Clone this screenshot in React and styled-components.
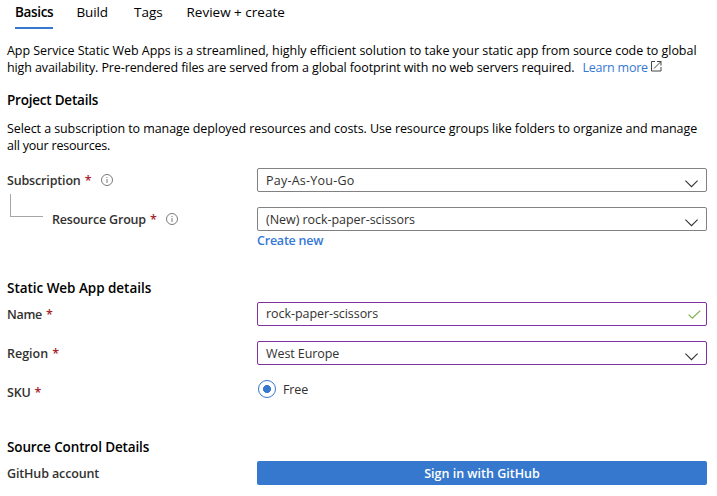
import React from 'react';
import styled, { createGlobalStyle } from 'styled-components';

const GlobalStyle = createGlobalStyle`
  * { box-sizing: border-box; }
  body {
    margin: 0;
    background: #fff;
    color: #000;
    font: 12.5px/17px "Open Sans", "Noto Sans", sans-serif;
  }
`;

const Page = styled.main`
  width: 717px;
  height: 496px;
  overflow: hidden;
  padding: 3px 10px 0 7px;
`;

const Tabs = styled.nav`
  display: grid;
  grid-template-columns: 61.5px 57.5px 52.5px auto;
  justify-content: start;
  height: 26px;
  padding-left: 8px;
`;

const Tab = styled.a`
  justify-self: start;
  height: 26px;
  font-size: 13.5px;
  line-height: 18px;
  white-space: nowrap;
  font-weight: ${(p) => (p.$active ? 600 : 400)};
  letter-spacing: ${(p) => p.$track || 0}px;
  border-bottom: 2px solid ${(p) => (p.$active ? '#3578cd' : 'transparent')};
`;

const Paragraph = styled.p`
  margin: ${(p) => p.$top}px 0 0;
`;

const Line = styled.span`
  display: flex;
  align-items: flex-start;
  height: 17px;
  white-space: pre;
  letter-spacing: ${(p) => p.$track || 0}px;
`;

const Heading = styled.h2`
  margin: ${(p) => p.$top}px 0 0;
  font-size: 13.5px;
  line-height: 18px;
  font-weight: 600;
  letter-spacing: ${(p) => p.$track || 0}px;
`;

const Link = styled.a`
  color: #3578d6;
  letter-spacing: -0.22px;
  font-weight: ${(p) => (p.$strong ? 600 : 400)};
`;

const InlineLink = styled(Link)`
  margin-left: 8px;
  margin-right: 3px;
`;

const ExternalSvg = styled.svg`
  margin-top: 2px;
`;

const Row = styled.div`
  display: grid;
  grid-template-columns: 250px 450px;
  height: 24px;
  margin-top: ${(p) => p.$top}px;
`;

const Label = styled.label`
  display: flex;
  align-items: center;
  height: 24px;
  color: #323130;
  font-weight: 600;
  line-height: 24px;
  white-space: nowrap;
  letter-spacing: ${(p) => p.$track || 0}px;
`;

const LabelText = styled.span`
  padding-top: 2px;
`;

const Required = styled.span`
  margin-left: 4px;
  padding-top: 2px;
  color: #a4262c;
  font-weight: 600;
  letter-spacing: 0;
`;

const InfoSvg = styled.svg`
  margin-left: 9px;
`;

const TreeBranch = styled.span`
  align-self: flex-start;
  width: 33px;
  height: 23px;
  margin: -13px 9px 0 3px;
  border: solid #a6a6a6;
  border-width: 0 0 1px 1px;
`;

const Field = styled.div`
  display: flex;
  align-items: center;
  justify-content: space-between;
  height: 24px;
  padding: 0 ${(p) => p.$padRight || 8}px 0 8px;
  border: 1px solid ${(p) => (p.$edited ? '#8031a0' : '#828282')};
  border-radius: 2px;
  color: #323130;
  letter-spacing: ${(p) => p.$track || 0}px;
`;

const Value = styled.span`
  line-height: 22px;
  padding-top: ${(p) => p.$drop || 0}px;
`;

const ChevronSvg = styled.svg`
  margin-top: 7px;
`;

const Below = styled.div`
  height: 17px;
  margin-left: 250px;
  margin-top: 1px;
`;

const Radio = styled.div`
  display: flex;
  gap: 7px;
  height: 18px;
  padding-left: 1px;
  color: #323130;
  line-height: 20px;
  letter-spacing: -0.15px;
`;

const Dial = styled.span`
  width: 18px;
  height: 18px;
  border: 1px solid #3578cd;
  border-radius: 50%;
  background: radial-gradient(circle, #3578cd 3.7px, transparent 4.3px);
`;

const PrimaryButton = styled.button`
  height: 24px;
  padding: 2px 0 0;
  border: 0;
  border-radius: 2px;
  background: #3578cd;
  color: #fff;
  font: inherit;
  font-weight: 600;
  line-height: 22px;
`;

const Chevron = () => (
  <ChevronSvg width="13" height="8" viewBox="0 0 13 8" fill="none" stroke="#323130" strokeWidth="1.1">
    <path d="M.4.6 6.5 6.7 12.6.6" />
  </ChevronSvg>
);

const Check = () => (
  <svg width="13" height="9" viewBox="0 0 13 9" fill="none" stroke="#7fb24f" strokeWidth="1.3">
    <path d="M.6 4.6 4.3 8.1 12.3.6" />
  </svg>
);

const Info = () => (
  <InfoSvg width="12" height="12" viewBox="0 0 12 12" fill="none" stroke="#6b6b6b" strokeWidth=".9">
    <circle cx="6" cy="6" r="5.5" />
    <path d="M6 5v4M6 3v1" />
  </InfoSvg>
);

const External = () => (
  <ExternalSvg width="11" height="11" viewBox="0 0 11 11" fill="none" stroke="#444" strokeWidth="1">
    <path d="M4 .5H.5v9.500h9.500V6M6 .5h4v4M10 .5 3 7.500" />
  </ExternalSvg>
);

const Caption = ({ children, track, required, info, nested }) => (
  <Label $track={track}>
    {nested && <TreeBranch />}
    <LabelText>{children}</LabelText>
    {required && <Required>*</Required>}
    {info && <Info />}
  </Label>
);

export default function App() {
  return (
    <Page>
      <GlobalStyle />
      <Tabs>
        <Tab $active $track={-0.35}>Basics</Tab>
        <Tab $track={-0.15}>Build</Tab>
        <Tab>Tags</Tab>
        <Tab>Review + create</Tab>
      </Tabs>

      <Paragraph $top={13}>
        <Line $track={-0.038}>App Service Static Web Apps is a streamlined, highly efficient solution to take your static app from source code to global</Line>
        <Line $track={-0.1}>
          high availability. Pre-rendered files are served from a global footprint with no web servers required.
          <InlineLink>Learn more</InlineLink>
          <External />
        </Line>
      </Paragraph>

      <Heading $top={15} $track={-0.22}>Project Details</Heading>
      <Paragraph $top={11}>
        <Line $track={-0.085}>Select a subscription to manage deployed resources and costs. Use resource groups like folders to organize and manage</Line>
        <Line $track={-0.2}>all your resources.</Line>
      </Paragraph>

      <Row $top={14}>
        <Caption required info track={-0.16}>Subscription</Caption>
        <Field $track={0.24}><Value $drop={2}>Pay-As-You-Go</Value><Chevron /></Field>
      </Row>
      <Row $top={15}>
        <Caption required info nested track={-0.2}>Resource Group</Caption>
        <Field $track={-0.04}><Value $drop={2}>(New) rock-paper-scissors</Value><Chevron /></Field>
      </Row>
      <Below><Link $strong>Create new</Link></Below>

      <Heading $top={30} $track={-0.04}>Static Web App details</Heading>
      <Row $top={5}>
        <Caption required track={-0.3}>Name</Caption>
        <Field $edited $padRight={5} $track={-0.06}><Value>rock-paper-scissors</Value><Check /></Field>
      </Row>
      <Row $top={15}>
        <Caption required>Region</Caption>
        <Field $edited $track={-0.08}><Value $drop={2}>West Europe</Value><Chevron /></Field>
      </Row>
      <Row $top={15}>
        <Caption required track={-0.2}>SKU</Caption>
        <Radio><Dial />Free</Radio>
      </Row>

      <Heading $top={34} $track={-0.13}>Source Control Details</Heading>
      <Row $top={5}>
        <Caption track={-0.13}>GitHub account</Caption>
        <PrimaryButton>Sign in with GitHub</PrimaryButton>
      </Row>
    </Page>
  );
}
